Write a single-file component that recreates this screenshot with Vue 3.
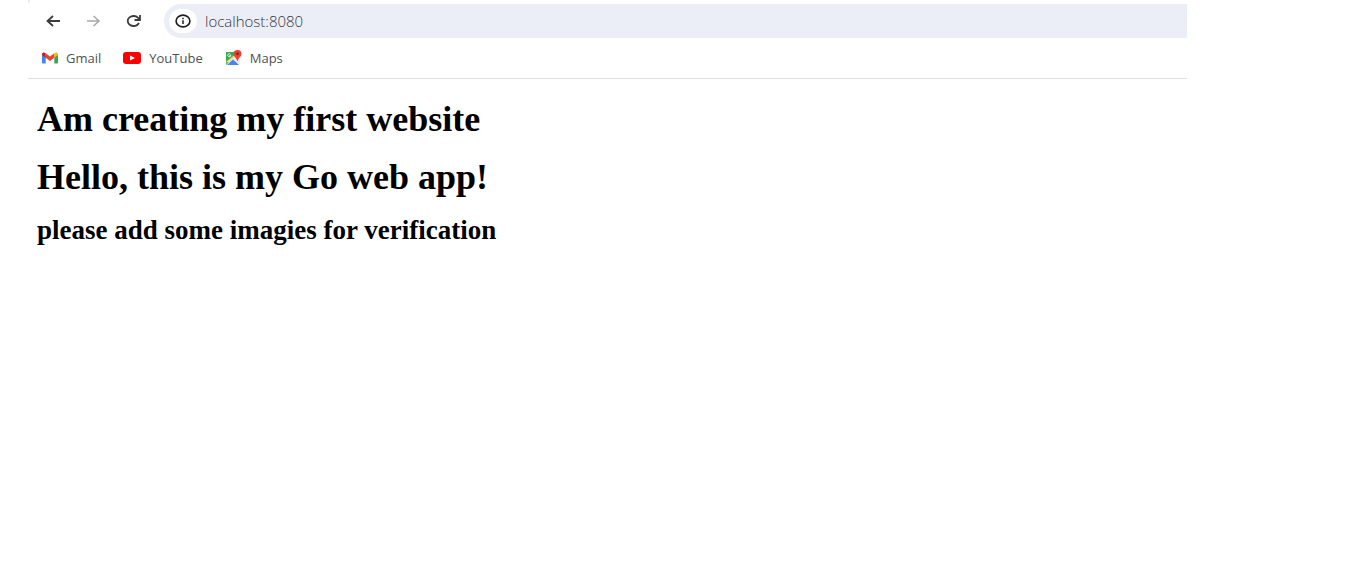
<script setup>
import { ref } from 'vue'

const address = ref('localhost:8080')
</script>

<template>
  <div class="window">
    <header>
      <div class="tab-edge"></div>
      <nav class="toolbar" aria-label="Browser controls">
        <button type="button" class="tool" aria-label="Back">
          <svg width="16" height="14" viewBox="0 0 16 14" fill="none" stroke="#3c3c3c" stroke-width="1.800">
            <path d="M15 7H2.500M8 2L2.500 7 8 12" />
          </svg>
        </button>
        <button type="button" class="tool" aria-label="Forward" disabled>
          <svg width="16" height="14" viewBox="0 0 16 14" fill="none" stroke="#a8a8a8" stroke-width="1.500">
            <path d="M2 7h12M8.500 2L14 7l-5.500 5" />
          </svg>
        </button>
        <button type="button" class="tool" aria-label="Reload">
          <svg width="16" height="14" viewBox="0 0 16 14" fill="none" stroke="#3c3c3c" stroke-width="1.800">
            <path d="M14 9A5.900 5 0 1 1 13.500 4.200L14.500 5.500M15 1v5H9.500" />
          </svg>
        </button>
        <div class="address">
          <button type="button" class="info" aria-label="Site information">
            <svg width="16" height="14" viewBox="0 0 16 14" fill="none" stroke="#202124" stroke-width="1.700">
              <ellipse cx="8" cy="7" rx="6.900" ry="5.900" />
              <path d="M8 6.200V10M8 3.800v1.500" stroke-width="1.500" />
            </svg>
          </button>
          <input v-model="address" type="text" aria-label="Address" />
        </div>
      </nav>
      <nav class="bookmarks" aria-label="Bookmarks">
        <a href="#">
          <svg width="16" height="12" viewBox="0 0 16 12">
            <path fill="#4285f4" d="M0 2v8.600Q0 11.500 1 11.500h2.700V4z" />
            <path fill="#34a853" d="M12.300 4v7.500H15q1 0 1-.900V2z" />
            <path fill="#ea4335" d="M3.700 1.300L8 4.500l4.300-3.200v4.500L8 9 3.700 5.800z" />
            <path fill="#c5221f" d="M0 2C0 .300 2 0 3.100.900l.600.400v4.500L0 3z" />
            <path fill="#fbbc04" d="M16 2c0-1.700-2-2-3.100-1.100l-.600.400v4.500L16 3z" />
          </svg>
          Gmail
        </a>
        <a href="#">
          <svg width="18" height="12" viewBox="0 0 18 12">
            <rect width="18" height="12" rx="3" fill="#f00" />
            <path fill="#fff" d="M7 3.500v5L12 6z" />
          </svg>
          YouTube
        </a>
        <a href="#">
          <svg width="17" height="16" viewBox="0 0 17 16">
            <path fill="#34a853" d="M2 2h9l3 6-7 1-6 6V3q0-1 1-1z" />
            <path fill="#e8eaed" d="M1 12L11 4l4 5v5z" />
            <path fill="#4285f4" d="M2 15l6-5.500 6 5.500z" />
            <path fill="#fbbc04" d="M1 11l7-6 2 2-9 7z" opacity=".35" />
            <path fill="none" stroke="#fff" stroke-width=".900" d="M5.500 4.300a1.500 1.500 0 1 0 .300 1.200H4.500" />
            <path fill="#ea4335" d="M12.500 0a4 4 0 0 1 4 4c0 2.500-3 3.500-4 7.500-1-4-4-5-4-7.500a4 4 0 0 1 4-4z" />
            <circle cx="12.500" cy="3.800" r="1.400" fill="#8c211b" />
          </svg>
          Maps
        </a>
      </nav>
    </header>
    <main>
      <h1>Am creating my first website</h1>
      <h1>Hello, this is my Go web app!</h1>
      <h2>please add some imagies for verification</h2>
    </main>
  </div>
</template>

<style>
body {
  background: #fff;
}
</style>

<style scoped>
.window {
  margin: 0 179px 0 28px;
  color: #000;
}

header {
  border-bottom: 1px solid #dfe0e2;
  font-family: "Open Sans", "Noto Sans", sans-serif;
}

.tab-edge {
  width: 2px;
  height: 4px;
  background: linear-gradient(#dfe3f1, #fff);
}

.toolbar {
  display: flex;
  align-items: center;
  gap: 16px;
  padding-left: 13px;
}

button {
  display: grid;
  place-items: center;
  padding: 0;
  border: 0;
  background: none;
}

.tool {
  width: 24px;
  height: 24px;
}

.address {
  display: flex;
  flex: 1;
  align-items: center;
  gap: 8px;
  height: 34px;
  margin-left: 3px;
  padding-left: 5px;
  border-radius: 17px 0 0 17px;
  background: #ebeef7;
}

.info {
  width: 28px;
  height: 24px;
  border-radius: 12px;
  background: #fff;
}

input {
  flex: 1;
  min-width: 0;
  padding: 0;
  border: 0;
  outline: 0;
  background: transparent;
  color: #34363a;
  font: 300 15px/20px "Open Sans", "Noto Sans", sans-serif;
}

.bookmarks {
  display: flex;
  gap: 22px;
  height: 40px;
  padding-left: 14px;
}

.bookmarks a {
  display: flex;
  align-items: center;
  gap: 8px;
  color: #4f5155;
  font-size: 13px;
  line-height: 20px;
  text-decoration: none;
}

main {
  padding: 21px 9px;
  font-family: "Liberation Serif", "Times New Roman", serif;
}

h1,
h2 {
  margin: 0;
  font-weight: bold;
}

h1 {
  margin-bottom: 20px;
  font-size: 36px;
  line-height: 38px;
}

h2 {
  font-size: 27px;
  line-height: 28px;
}
</style>
